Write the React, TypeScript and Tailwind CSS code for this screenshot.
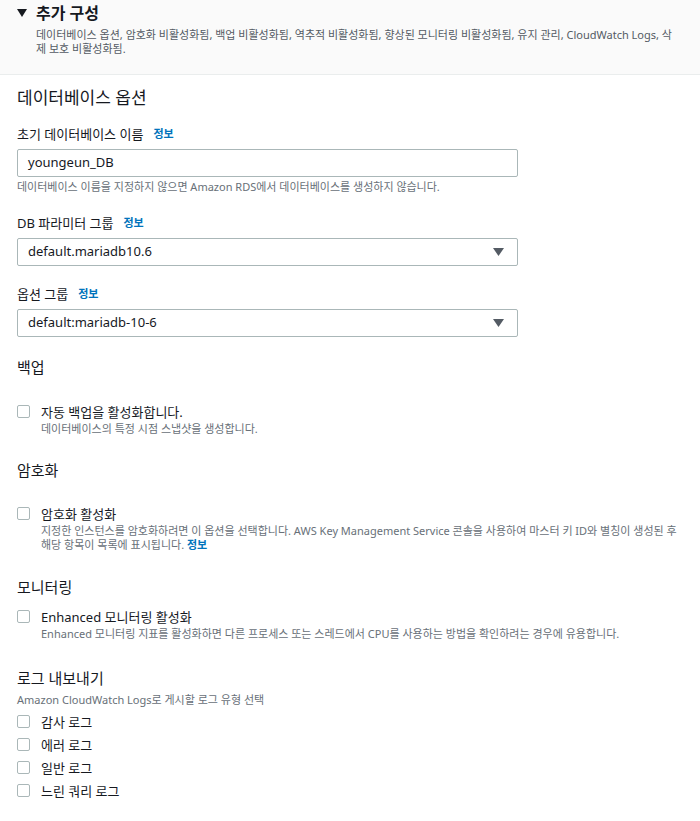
const font = { fontFamily: '"Noto Sans", "Noto Sans CJK KR", sans-serif' };

function Info() {
  return <span className="ml-[10px] text-[11px] font-bold text-[#0073bb]">정보</span>;
}

function Box() {
  return <span className="mt-[2px] block h-[13px] w-[13px] shrink-0 rounded-[2px] border border-[#aab7b8] bg-white" />;
}

function Caret() {
  return (
    <svg width="11" height="8" viewBox="0 0 11 8" className="mr-[3px]">
      <path d="M0 0h11L5.5 8z" fill="#545b64" />
    </svg>
  );
}

function Field({ label, value, select }: { label: string; value: string; select?: boolean }) {
  return (
    <div>
      <div className="flex items-center text-[13px] leading-[18px] text-[#16191f]">
        {label}
        <Info />
      </div>
      <div className="mt-[6px] flex h-[28px] w-[501px] items-center justify-between rounded-[2px] border border-[#aab7b8] bg-white pl-[10px] pr-[10px] text-[13px] text-[#16191f]">
        <span>{value}</span>
        {select && <Caret />}
      </div>
    </div>
  );
}

function Check({ label, desc }: { label: string; desc?: React.ReactNode }) {
  return (
    <div className="flex gap-[11px]">
      <Box />
      <div>
        <div className="text-[13px] leading-[18px] text-[#16191f]">{label}</div>
        {desc && <div className="mt-[1px] text-[11px] leading-[14px] text-[#687078]">{desc}</div>}
      </div>
    </div>
  );
}

export default function App() {
  return (
    <div className="min-h-[821px] w-[700px] bg-white" style={font}>
      <div className="border-b border-[#eaeded] bg-[#fafafa] pb-[18px] pl-[17px] pr-[20px] pt-[2px]">
        <div className="flex items-center gap-[9px]">
          <svg width="10" height="8" viewBox="0 0 10 8">
            <path d="M0 0h10L5 8z" fill="#16191f" />
          </svg>
          <span className="text-[16px] font-bold leading-[22px] text-[#16191f]">추가 구성</span>
        </div>
        <p className="mt-[4px] break-all pl-[19px] text-[11px] leading-[14px] text-[#545b64]">
          데이터베이스 옵션, 암호화 비활성화됨, 백업 비활성화됨, 역추적 비활성화됨, 향상된 모니터링 비활성화됨, 유지 관리, CloudWatch Logs, 삭제 보호 비활성화됨.
        </p>
      </div>

      <div className="px-[17px]">
        <h2 className="mt-[11px] text-[17px] leading-[24px] text-[#16191f]">데이터베이스 옵션</h2>

        <div className="mt-[15px]">
          <Field label="초기 데이터베이스 이름" value="youngeun_DB" />
          <p className="mt-[3px] text-[11px] leading-[14px] text-[#687078]">
            데이터베이스 이름을 지정하지 않으면 Amazon RDS에서 데이터베이스를 생성하지 않습니다.
          </p>
        </div>

        <div className="mt-[20px]">
          <Field label="DB 파라미터 그룹" value="default.mariadb10.6" select />
        </div>

        <div className="mt-[19px]">
          <Field label="옵션 그룹" value="default:mariadb-10-6" select />
        </div>

        <h2 className="mt-[19px] text-[15px] leading-[22px] text-[#16191f]">백업</h2>
        <div className="mt-[25px]">
          <Check label="자동 백업을 활성화합니다." desc="데이터베이스의 특정 시점 스냅샷을 생성합니다." />
        </div>

        <h2 className="mt-[23px] text-[15px] leading-[22px] text-[#16191f]">암호화</h2>
        <div className="mt-[24px]">
          <Check
            label="암호화 활성화"
            desc={
              <>
                지정한 인스턴스를 암호화하려면 이 옵션을 선택합니다. AWS Key Management Service 콘솔을 사용하여 마스터 키 ID와 별칭이 생성된 후 해당 항목이 목록에 표시됩니다.{' '}
                <span className="font-bold text-[#0073bb]">정보</span>
              </>
            }
          />
        </div>

        <h2 className="mt-[24px] text-[15px] leading-[22px] text-[#16191f]">모니터링</h2>
        <div className="mt-[10px]">
          <Check
            label="Enhanced 모니터링 활성화"
            desc="Enhanced 모니터링 지표를 활성화하면 다른 프로세스 또는 스레드에서 CPU를 사용하는 방법을 확인하려는 경우에 유용합니다."
          />
        </div>

        <h2 className="mt-[26px] text-[15px] leading-[22px] text-[#16191f]">로그 내보내기</h2>
        <p className="mt-[4px] text-[11px] leading-[14px] text-[#687078]">
          Amazon CloudWatch Logs로 게시할 로그 유형 선택
        </p>
        <div className="mt-[6px] flex flex-col gap-[5px]">
          <Check label="감사 로그" />
          <Check label="에러 로그" />
          <Check label="일반 로그" />
          <Check label="느린 쿼리 로그" />
        </div>
      </div>
    </div>
  );
}
